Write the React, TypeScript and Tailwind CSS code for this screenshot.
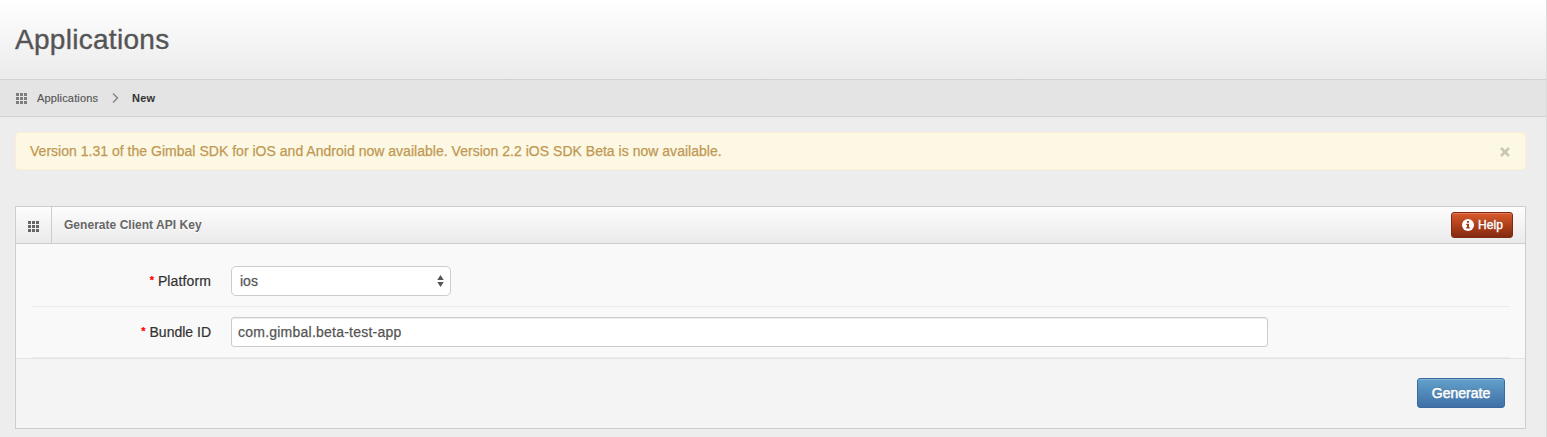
import React, { useState } from "react";

function GridIcon({ className = "" }: { className?: string }) {
  const cells = [0, 4, 8];
  return (
    <svg width="11" height="11" viewBox="0 0 11 11" className={className} fill="currentColor" shapeRendering="crispEdges">
      {cells.map((y) => cells.map((x) => <rect key={`${x}-${y}`} x={x} y={y} width="3" height="3" />))}
    </svg>
  );
}

function InfoIcon() {
  return (
    <svg width="12" height="12" viewBox="0 0 12 12" className="mr-1 shrink-0">
      <circle cx="6" cy="6" r="6" fill="#fff" />
      <path d="M5 2h2v1.7H5zM4.2 4.8H7v3.5h.9v1.3H4.1V8.3H5V6h-.8z" fill="#a83c1a" />
    </svg>
  );
}

function Label({ children }: { children: React.ReactNode }) {
  return (
    <label className="flex w-[179px] shrink-0 justify-end gap-1 text-[14px] leading-5 text-[#333] [-webkit-text-stroke:0.2px]">
      <span className="text-[11px] font-bold leading-[18px] text-[#f00]">*</span>
      <span>{children}</span>
    </label>
  );
}

export default function App() {
  const [bundle, setBundle] = useState("com.gimbal.beta-test-app");
  return (
    <div className="h-[437px] overflow-hidden border-r border-[#dcdcdc] bg-[#ededed] font-['Liberation_Sans',Arial,sans-serif] text-[#333]">
      <header className="flex h-20 items-center border-b border-[#d2d2d2] bg-linear-to-b from-white to-[#ebebeb] pl-[15px]">
        <h1 className="text-[28px] leading-9 tracking-[0.29px] text-[#555] [-webkit-text-stroke:0.4px] [text-shadow:0_1px_0_#fff]">Applications</h1>
      </header>
      <nav className="flex h-[37px] items-center border-b border-[#d0d0d0] bg-[#e4e4e4] pl-4 text-[11px] leading-4">
        <GridIcon className="text-[#7d7d7d]" />
        <a className="ml-[10px] w-[61px] whitespace-nowrap tracking-[0.15px] text-[#555] [-webkit-text-stroke:0.15px]">Applications</a>
        <svg width="7" height="10" viewBox="0 0 7 10" className="ml-[14px]" fill="none" stroke="#888" strokeWidth="1.5">
          <path d="M1 .5 5.5 5 1 9.5" />
        </svg>
        <strong className="ml-[13px] tracking-[0.2px] text-[#333]">New</strong>
      </nav>
      <main className="pl-[15px] pr-5 pt-[15px]">
        <div className="flex h-[38px] items-center justify-between rounded-[4px] border border-[#fbeed5] bg-[#fcf8e3] pl-[14px] pr-[15px] text-[14px] leading-5 text-[#c09853]">
          <span className="tracking-[0.02px] [-webkit-text-stroke:0.25px]">Version 1.31 of the Gimbal SDK for iOS and Android now available. Version 2.2 iOS SDK Beta is now available.</span>
          <button aria-label="Close" className="pt-px">
            <svg width="10" height="10" viewBox="0 0 10 10" stroke="#cac6b6" strokeWidth="2.6">
              <path d="m1 1 8 8M9 1 1 9" />
            </svg>
          </button>
        </div>
        <section className="mt-9 flex h-[223px] flex-col border border-[#cdcdcd] bg-[#f9f9f9]">
          <div className="flex h-[37px] shrink-0 items-center border-b border-[#cdcdcd] bg-linear-to-b from-[#fdfdfd] to-[#eaeaea]">
            <div className="flex h-full w-9 items-center border-r border-[#cdcdcd] pl-3 pt-[3px]">
              <GridIcon className="text-[#666]" />
            </div>
            <h2 className="ml-3 text-[12px] font-bold leading-[18px] tracking-[0.03px] text-[#666] [text-shadow:0_1px_0_#fff]">Generate Client API Key</h2>
            <button className="ml-auto mr-3 flex h-[26px] w-[62px] items-center rounded-[3px] border border-[#7d2b14] bg-linear-to-b from-[#da5a2b] to-[#84290f] pl-[10px] text-[12px] leading-[18px] text-white shadow-[inset_0_1px_0_rgba(255,255,255,0.2)] [-webkit-text-stroke:0.4px] [text-shadow:0_-1px_0_rgba(0,0,0,0.25)]">
              <InfoIcon />
              <span className="tracking-[0.1px]">Help</span>
            </button>
          </div>
          <form className="flex flex-1 flex-col" onSubmit={(e) => e.preventDefault()}>
            <div className="ml-4 mr-[15px] flex h-[63px] shrink-0 items-center border-b border-[#ececec] pt-3">
              <Label><span className="tracking-[0.12px]">Platform</span></Label>
              <button type="button" className="ml-5 flex h-[30px] w-[220px] items-center justify-between rounded-[5px] border border-[#ccc] bg-white pl-2 pr-[6px] text-[14px] leading-5 text-[#555] [-webkit-text-stroke:0.25px]">
                <span>ios</span>
                <svg width="7" height="12" viewBox="0 0 7 12" fill="#555">
                  <path d="M3.5 0 6.7 5H.3zM3.5 12 .3 7h6.4z" />
                </svg>
              </button>
            </div>
            <div className="ml-4 mr-[15px] flex h-[51px] shrink-0 items-center border-b border-[#ececec]">
              <Label>Bundle ID</Label>
              <input
                value={bundle}
                onChange={(e) => setBundle(e.target.value)}
                className="ml-5 h-[30px] w-[1037px] rounded-[3px] border border-[#ccc] bg-white px-[6px] text-[14px] leading-5 tracking-[0.23px] text-[#555] shadow-[inset_0_1px_1px_rgba(0,0,0,0.075)] outline-none [-webkit-text-stroke:0.25px]"
              />
            </div>
            <div className="flex flex-1 items-center justify-end border-t border-[#e3e3e3] bg-[#f4f4f4] pb-[2px] pr-5">
              <button className="h-[30px] w-[88px] rounded-[3px] border border-[#3a6a9e] bg-linear-to-b from-[#62a1cb] to-[#4070a6] text-[14px] leading-5 text-white shadow-[inset_0_1px_0_rgba(255,255,255,0.2)] [-webkit-text-stroke:0.5px] [text-shadow:0_-1px_0_rgba(0,0,0,0.25)]">
                Generate
              </button>
            </div>
          </form>
        </section>
      </main>
    </div>
  );
}
